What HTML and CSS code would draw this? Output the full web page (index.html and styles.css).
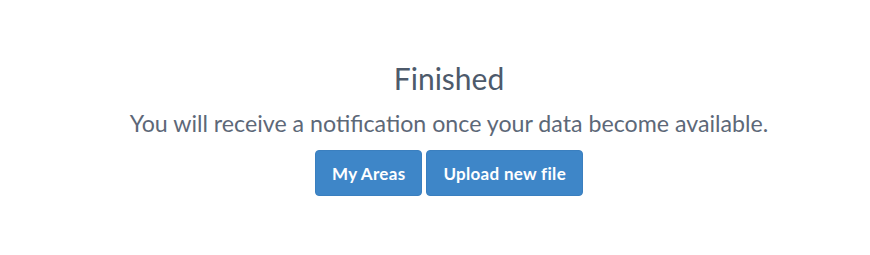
FILE: index.html
```html
<!DOCTYPE html>
<html>
<head>
<meta charset="utf-8">
<link rel="stylesheet" href="styles.css">
</head>
<body>
<main class="page">
  <section class="done">
    <h1 class="done-title">Finished</h1>
    <p class="done-text">You will receive a notification once your data become available.</p>
    <div class="done-actions">
      <button class="btn">My Areas</button>
      <button class="btn">Upload new file</button>
    </div>
  </section>
</main>
</body>
</html>
```
FILE: styles.css
```css
html, body {
  margin: 0;
  padding: 0;
  background: #ffffff;
}
.page {
  width: 870px;
  height: 255px;
  box-sizing: border-box;
  padding: 58px 0 0 28px;
  font-family: "Lato", "Liberation Sans", sans-serif;
}
.done {
  display: flex;
  flex-direction: column;
  align-items: center;
}
.done-title {
  margin: 0;
  font-size: 30px;
  font-weight: 400;
  line-height: 40px;
  color: #4d5a6b;
}
.done-text {
  margin: 9px 0 0;
  font-size: 23.2px;
  line-height: 32px;
  color: #5d6878;
}
.done-actions {
  display: flex;
  gap: 4px;
  margin-top: 11px;
}
.btn {
  font-family: inherit;
  font-size: 17px;
  font-weight: 700;
  letter-spacing: 0.3px;
  color: #ffffff;
  background: #3e86c8;
  border: 1px solid #3a7fbf;
  border-radius: 4px;
  height: 46px;
  padding: 0 16px;
}
```
